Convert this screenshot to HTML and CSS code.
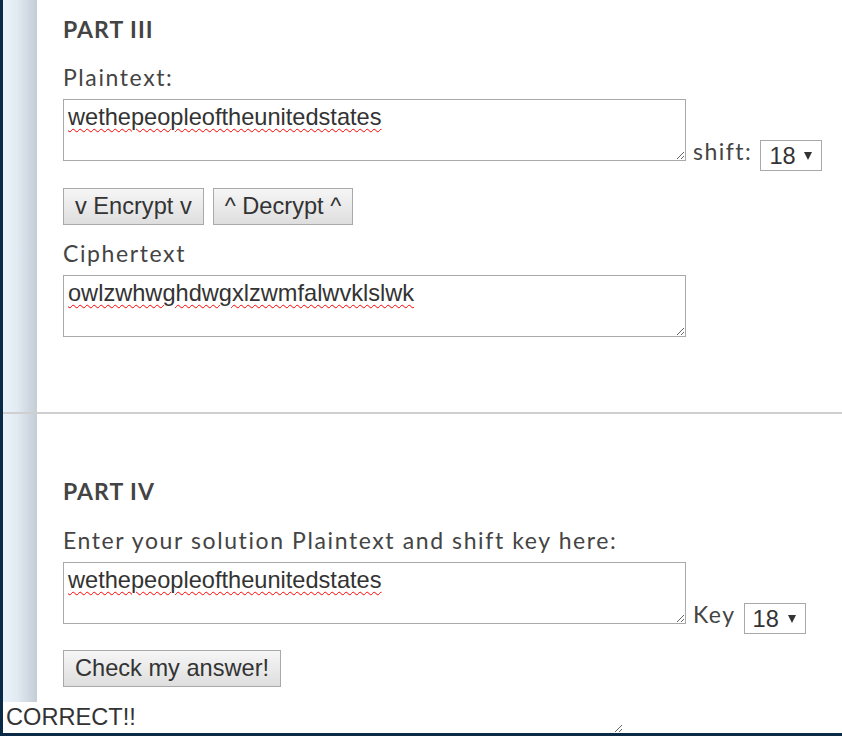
FILE: index.html
```html
<!DOCTYPE html>
<html>
<head>
<meta charset="utf-8">
<link rel="stylesheet" href="styles.css">
</head>
<body>
<div class="page">
  <div class="main">
    <div class="content">
      <section class="part part3">
        <h2 class="part-title">PART III</h2>
        <label class="field-label">Plaintext:</label>
        <div class="row">
          <textarea class="box" spellcheck="true">wethepeopleoftheunitedstates</textarea>
          <span class="inline-label">shift:</span>
          <span class="select-wrap"><select class="num-select"><option>18</option></select></span>
        </div>
        <div class="buttons">
          <button class="btn">v Encrypt v</button>
          <button class="btn">^ Decrypt ^</button>
        </div>
        <label class="field-label">Ciphertext</label>
        <div class="row">
          <textarea class="box">owlzwhwghdwgxlzwmfalwvklslwk</textarea>
        </div>
      </section>
      <hr class="divider">
      <section class="part part4">
        <h2 class="part-title">PART IV</h2>
        <label class="field-label">Enter your solution Plaintext and shift key here:</label>
        <div class="row">
          <textarea class="box">wethepeopleoftheunitedstates</textarea>
          <span class="inline-label">Key</span>
          <span class="select-wrap"><select class="num-select"><option>18</option></select></span>
        </div>
        <div class="buttons">
          <button class="btn">Check my answer!</button>
        </div>
      </section>
    </div>
  </div>
  <textarea class="result">CORRECT!!</textarea>
</div>
</body>
</html>
```
FILE: styles.css
```css
html, body {
  margin: 0;
  padding: 0;
}
body {
  background: #0b2a45;
  width: 842px;
  height: 736px;
  overflow: hidden;
}
.page {
  margin-left: 3px;
  background: #fff;
  height: 733px;
  display: flex;
  flex-direction: column;
}
.main {
  height: 702px;
  background-image: linear-gradient(to right, #eaf2fa 0%, #e2eaf2 40%, #c4cdd6 100%);
  background-size: 34px 100%;
  background-repeat: no-repeat;
}
.content {
  padding-left: 60px;
  font-family: Lato, "Open Sans", sans-serif;
  color: #444;
}
.part-title {
  margin: 0;
  font-size: 23px;
  font-weight: bold;
  line-height: 26px;
  letter-spacing: 1px;
}
.part3 .part-title {
  margin-top: 16px;
}
.part4 .part-title {
  margin-top: 64px;
}
.field-label {
  display: block;
  font-size: 23px;
  line-height: 28px;
  letter-spacing: 1.6px;
  margin-top: 14px;
}
.part3 .field-label:first-of-type {
  margin-top: 21px;
}
.part4 .field-label:first-of-type {
  margin-top: 22px;
}
.row {
  display: flex;
  align-items: flex-end;
  margin-top: 8px;
}
.box {
  width: 623px;
  height: 62px;
  box-sizing: border-box;
  border: 1px solid #a9a9a9;
  padding: 4px 4px;
  margin: 0;
  font-family: "Liberation Sans", Arial, sans-serif;
  font-size: 23.6px;
  color: #333;
  resize: both;
  text-decoration: underline wavy #f00;
  text-decoration-thickness: 1px;
  text-underline-offset: 3px;
}
.inline-label {
  font-size: 23px;
  letter-spacing: 1.5px;
  margin-left: 7px;
  line-height: 24px;
  margin-bottom: -2px;
}
.select-wrap {
  position: relative;
  margin-left: 8px;
  margin-bottom: -10px;
}
.select-wrap::after {
  content: "";
  position: absolute;
  right: 10px;
  top: 12px;
  width: 0;
  height: 0;
  border-left: 4.5px solid transparent;
  border-right: 4.5px solid transparent;
  border-top: 8px solid #333;
  pointer-events: none;
}
.num-select {
  appearance: none;
  -webkit-appearance: none;
  width: 62px;
  height: 31px;
  border: 1px solid #a9a9a9;
  border-radius: 0;
  background: #fff;
  font-family: "Liberation Sans", Arial, sans-serif;
  font-size: 23.6px;
  color: #333;
  padding: 0 0 0 8px;
  margin: 0;
}
.buttons {
  display: flex;
  gap: 9px;
  margin-top: 27px;
}
.part4 .buttons {
  margin-top: 26px;
}
.btn {
  height: 37px;
  border: 1px solid #a9a9a9;
  border-radius: 0;
  background: linear-gradient(#f6f6f6, #dedede);
  font-family: "Liberation Sans", Arial, sans-serif;
  font-size: 23.6px;
  color: #333;
  padding: 0 11px;
  margin: 0;
}
.divider {
  margin: 75px 0 0 -60px;
  border: 0;
  height: 2px;
  background: #cfcfcf;
}
.result {
  height: 31px;
  width: 620px;
  box-sizing: border-box;
  border: none;
  margin: 0;
  padding: 0 3px;
  font-family: "Liberation Sans", Arial, sans-serif;
  font-size: 23.6px;
  line-height: 30px;
  color: #333;
  resize: both;
  outline: none;
  overflow: hidden;
}
```
